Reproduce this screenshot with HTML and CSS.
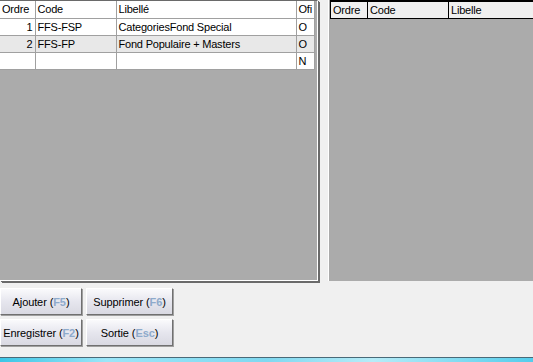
FILE: index.html
```html
<!DOCTYPE html>
<html lang="fr">
<head>
  <meta charset="UTF-8" />
  <title>Categories</title>
  <link rel="stylesheet" href="styles.css">
</head>
<body>

  <div class="top">
    <div class="grid left-grid">
      <table class="tbl">
        <tr class="head">
          <td class="c-ordre">Ordre</td>
          <td class="c-code">Code</td>
          <td class="c-lib">Libellé</td>
          <td class="c-ofi">Ofi</td>
        </tr>
        <tr>
          <td class="num">1</td>
          <td>FFS-FSP</td>
          <td>CategoriesFond Special</td>
          <td>O</td>
        </tr>
        <tr class="alt">
          <td class="num">2</td>
          <td>FFS-FP</td>
          <td>Fond Populaire + Masters</td>
          <td>O</td>
        </tr>
        <tr>
          <td class="num"></td>
          <td></td>
          <td></td>
          <td>N</td>
        </tr>
      </table>
      <div class="vbar"></div>
    </div>

    <div class="grid right-grid">
      <div class="rhead">
        <div class="rcell r-ordre">Ordre</div>
        <div class="rcell r-code">Code</div>
        <div class="rcell r-lib">Libelle</div>
      </div>
    </div>
  </div>

  <div class="buttons">
    <button class="btn">Ajouter (<span class="key">F5</span>)</button>
    <button class="btn">Supprimer (<span class="key">F6</span>)</button>
    <button class="btn">Enregistrer (<span class="key">F2</span>)</button>
    <button class="btn">Sortie (<span class="key">Esc</span>)</button>
  </div>

  <div class="taskbar"></div>

</body>
</html>
```

FILE: styles.css
```css
* {
  box-sizing: border-box;
}

body {
  margin: 0;
  padding: 0;
  background: #f0f0f0;
  font-family: "Liberation Sans", Arial, sans-serif;
  font-size: 11px;
  letter-spacing: -0.2px;
  color: #000;
  width: 533px;
  height: 362px;
  overflow: hidden;
  display: flex;
  flex-direction: column;
}

.top {
  display: flex;
  height: 285px;
}

.grid {
  background: #ababab;
  height: 100%;
}

.left-grid {
  width: 318px;
  display: flex;
  border-top: 1px solid #6a6a6a;
  border-right: 1px solid #fff;
  border-bottom: 1px solid #fff;
  box-shadow: 1px 1px 0 #6a6a6a, 2px 2px 0 #6a6a6a;
  height: 281px;
}

.tbl {
  border-collapse: collapse;
  width: 314px;
  table-layout: fixed;
  align-self: flex-start;
}

.tbl td {
  background: #fff;
  border: 1px solid #a0a0a0;
  border-top: none;
  height: 17px;
  padding: 0 2px;
  white-space: nowrap;
  overflow: hidden;
  line-height: 16px;
}

.tbl tr.alt td {
  background: #e8e8e8;
}

.tbl td:first-child {
  border-left: none;
}

.tbl .head td {
  height: 17px;
}

.c-ordre { width: 35px; }
.c-code { width: 81px; }
.c-lib { width: 180px; }
.c-ofi { width: 18px; }

.num {
  text-align: right;
}

.vbar {
  flex: 1;
}

.right-grid {
  flex: 1;
  margin-left: 10px;
  border-left: 1px solid #fff;
  height: 281px;
}

.rhead {
  display: flex;
  height: 19px;
  background: #f0f0f0;
  border-top: 2px solid #000;
  border-bottom: 1px solid #000;
  margin-left: 1px;
}

.rcell {
  border-left: 1px solid #000;
  padding: 0 2px;
  line-height: 16px;
}

.r-ordre { width: 37px; }
.r-code { width: 81px; }
.r-lib { flex: 1; }

.buttons {
  display: grid;
  grid-template-columns: 82px 87px;
  grid-auto-rows: 27px;
  column-gap: 4px;
  row-gap: 4px;
  margin-top: 3px;
  width: 175px;
}

.btn {
  font-family: "Liberation Sans", Arial, sans-serif;
  font-size: 11px;
  letter-spacing: -0.1px;
  white-space: nowrap;
  color: #000;
  padding: 0;
  background: linear-gradient(#fafafc, #e6e6ee 50%, #d9d9e2);
  border: 1px solid;
  border-color: #fff #707070 #707070 #fff;
  box-shadow: 1px 1px 0 #a0a0a0;
  cursor: pointer;
}

.key {
  color: #8eaacb;
  font-weight: bold;
}

.taskbar {
  margin-top: auto;
  height: 5px;
  border-top: 1px solid #4a6a78;
  background: linear-gradient(90deg, #3cc6e6, #9be6f8 20%, #7fd8f0 50%, #b6ecf8 70%, #54cdec);
}
```
